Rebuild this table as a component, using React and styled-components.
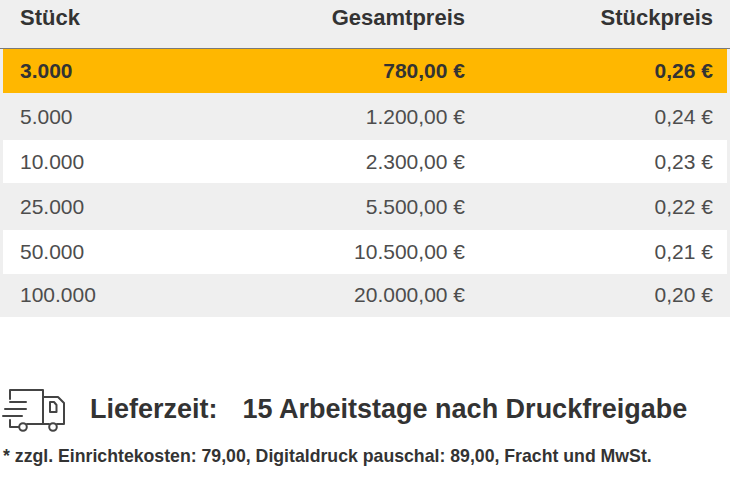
import React from "react";
import styled, { createGlobalStyle } from "styled-components";

const GlobalStyle = createGlobalStyle`
  html, body {
    margin: 0;
    padding: 0;
    background: #ffffff;
  }
  body {
    font-family: "Liberation Sans", Arial, sans-serif;
    color: #333333;
  }
`

const Page = styled.div`
  display: flex;
  flex-direction: column;
  width: 730px;
`
const Table = styled.div`
  display: flex;
  flex-direction: column;
  background: #efefef;
  padding: 0 3px 2px 3px;
`
const Row = styled.div`
  display: grid;
  grid-template-columns: 1fr 1fr 248px;
  align-items: center;
  height: ${({h}) => h || 44}px;
  padding: 0 14px 0 17px;
  background: ${({bg}) => bg || "transparent"};
  font-size: 21px;
  color: #4d4d4d;
`
const HeaderRow = styled(Row)`
  align-items: flex-start;
  line-height: 36px;
  font-size: 22px;
  font-weight: bold;
  color: #333333;
  border-bottom: 1px solid #7a7a7a;
  margin: 0 -3px;
  padding: 0 17px 0 20px;
`
const ActiveRow = styled(Row)`
  font-weight: bold;
  color: #333333;
  font-size: 21px;
`
const Cell = styled.span`
  text-align: ${({right}) => right ? "right" : "left"};
  white-space: nowrap;
`
const Delivery = styled.div`
  display: flex;
  align-items: center;
  margin-top: 69px;
  padding-left: 2px;
  height: 46px;
`
const Truck = styled.svg`
  width: 66px;
  height: 46px;
  flex-shrink: 0;
`
const DeliveryLabel = styled.span`
  font-size: 27px;
  font-weight: bold;
  color: #333333;
  margin-left: 22px;
  margin-right: 25px;
`
const DeliveryValue = styled(DeliveryLabel)`
  margin: 0;
`
const Note = styled.div`
  font-size: 17.7px;
  font-weight: bold;
  color: #333333;
  margin-top: 14px;
  padding-left: 3px;
`

const rows = [
    ["5.000", "1.200,00 €", "0,24 €", "#efefef", 47],
    ["10.000", "2.300,00 €", "0,23 €", "#ffffff", 43],
    ["25.000", "5.500,00 €", "0,22 €", "#efefef", 47],
    ["50.000", "10.500,00 €", "0,21 €", "#ffffff", 44],
    ["100.000", "20.000,00 €", "0,20 €", "#efefef", 41],
]

const TruckIcon = () => (
    <Truck viewBox="0 0 66 46" fill="none" stroke="#444" strokeWidth="2" strokeLinecap="round" strokeLinejoin="round">
        <path d="M8 13 V4 H41 V38"/>
        <path d="M41 11 H56 L62 17 V38 H55"/>
        <path d="M47 38 H25"/>
        <path d="M48 16 H52 L54.5 19 V26 H48 Z"/>
        <path d="M8 16 H24"/>
        <path d="M3 23 H24"/>
        <path d="M1 30 H20"/>
        <path d="M8 34 V41 H16.5"/>
        <circle cx="21" cy="41" r="3.8"/>
        <circle cx="51" cy="41" r="3.8"/>
    </Truck>
)

const App = () => {
    return (<Page>
        <GlobalStyle/>
        <Table>
            <HeaderRow h={48}>
                <Cell>{'Stück'}</Cell>
                <Cell right>{'Gesamtpreis'}</Cell>
                <Cell right>{'Stückpreis'}</Cell>
            </HeaderRow>
            <ActiveRow bg={'#ffb700'} h={44}>
                <Cell>{'3.000'}</Cell>
                <Cell right>{'780,00 €'}</Cell>
                <Cell right>{'0,26 €'}</Cell>
            </ActiveRow>
            {rows.map(([qty, total, unit, bg, h]) => (
                <Row key={qty} bg={bg} h={h}>
                    <Cell>{qty}</Cell>
                    <Cell right>{total}</Cell>
                    <Cell right>{unit}</Cell>
                </Row>
            ))}
        </Table>
        <Delivery>
            <TruckIcon/>
            <DeliveryLabel>{'Lieferzeit:'}</DeliveryLabel>
            <DeliveryValue>{'15 Arbeitstage nach Druckfreigabe'}</DeliveryValue>
        </Delivery>
        <Note>{'* zzgl. Einrichtekosten: 79,00, Digitaldruck pauschal: 89,00, Fracht und MwSt.'}</Note>
    </Page>)
}

export default App;
